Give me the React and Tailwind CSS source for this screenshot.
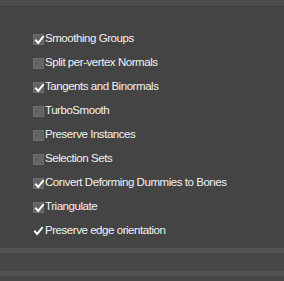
const items = [
	{ label: 'Smoothing Groups', on: true },
	{ label: 'Split per-vertex Normals', on: false },
	{ label: 'Tangents and Binormals', on: true },
	{ label: 'TurboSmooth', on: false },
	{ label: 'Preserve Instances', on: false },
	{ label: 'Selection Sets', on: false },
	{ label: 'Convert Deforming Dummies to Bones', on: true },
	{ label: 'Triangulate', on: true },
	{ label: 'Preserve edge orientation', on: true, bare: true },
]

const Check = () => (
	<svg width="11" height="11" viewBox="0 0 11 11" className="absolute left-0 top-0">
		<path d="M2 5.5 L4.2 8 L9 2" stroke="#ffffff" strokeWidth="2" fill="none" strokeLinecap="square" />
	</svg>
)

function Row({ label, on, bare }) {
	return (
		<div className="flex items-center h-[24px]">
			<div className={`relative w-[11px] h-[11px] ${bare ? '' : 'bg-[#626262] border border-[#6e6e6e]'}`}>
				{on && <Check />}
			</div>
			<div className="ml-[1px] text-[11.5px] tracking-[-0.45px] text-[#f2f2f2] leading-none">{label}</div>
		</div>
	)
}

export default function App() {
	return (
		<div className="w-[284px] h-[281px] bg-[#444444] flex flex-col" style={{ fontFamily: '"Liberation Sans", Arial, sans-serif' }}>
			<div className="h-[6px] bg-[#4d4d4d]" />
			<div className="h-[1px] bg-[#3c3c3c]" />
			<div className="flex-1 flex flex-col pl-[33px] pt-[20px]">
				{items.map((it, i) => <Row key={i} {...it} />)}
			</div>
			<div className="h-[5px] bg-[#525252]" />
			<div className="h-[18px] bg-[#474747]" />
			<div className="h-[5px] bg-[#525252]" />
			<div className="h-[5px] bg-[#474747]" />
		</div>
	)
}
